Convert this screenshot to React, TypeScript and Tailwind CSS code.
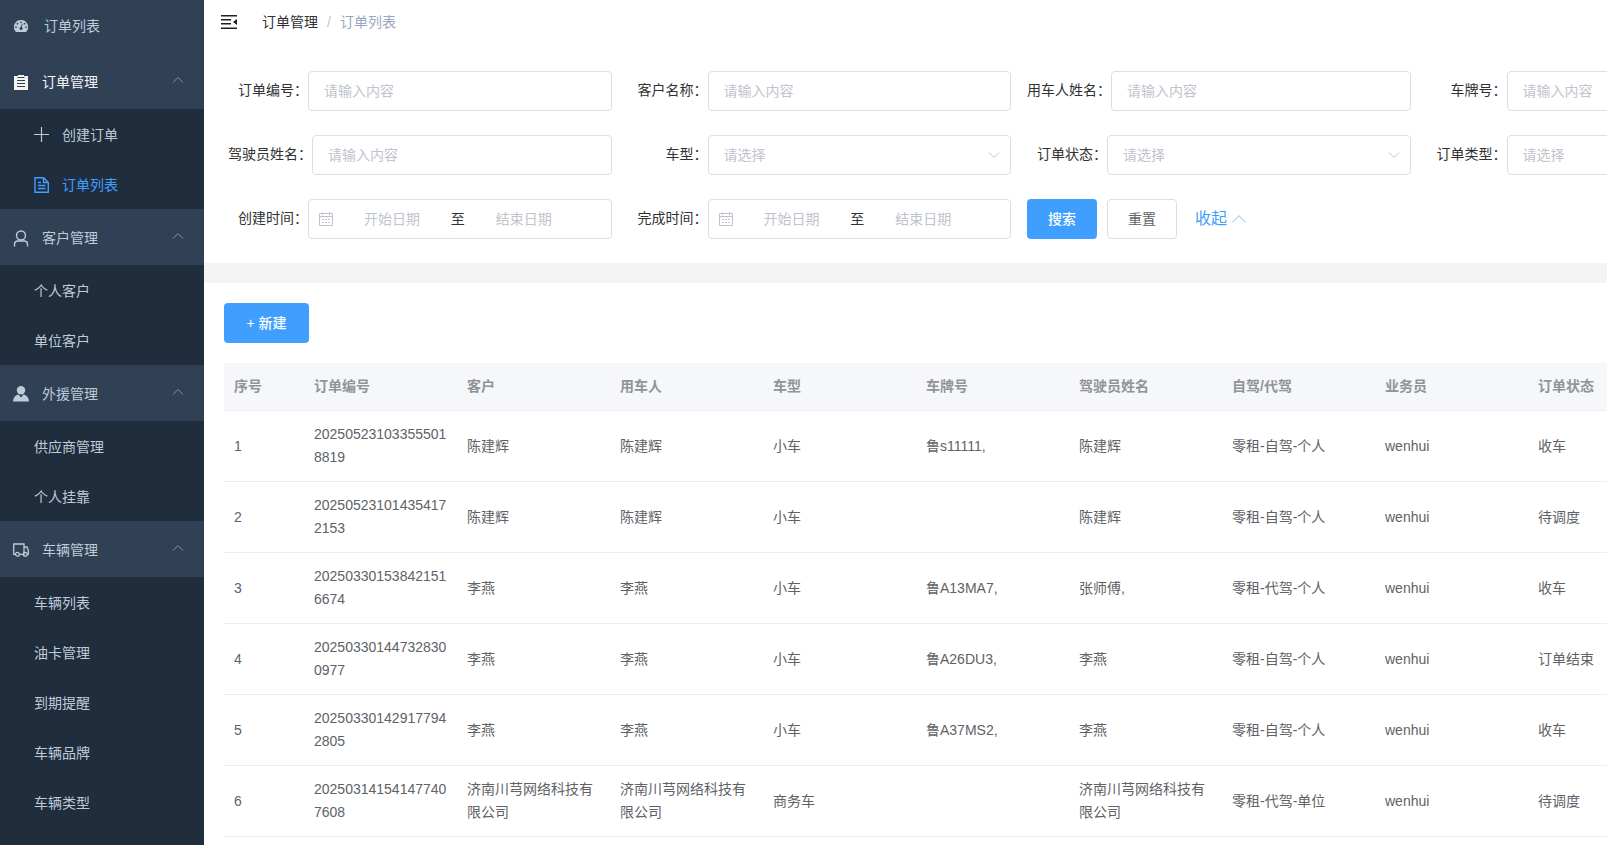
import type { ReactNode } from "react";
import { useId } from "react";

const DashboardIcon = () => (
  <svg width="14" height="12" viewBox="0 0 128 108" fill="currentColor" fillRule="evenodd">
    <path d="M64 0a64 64 0 0 0-56 96q4 12 12 12h88q8 0 12-12A64 64 0 0 0 64 0ZM18 72a8 8 0 1 1 0-16 8 8 0 0 1 0 16Zm14-31a8 8 0 1 1 0-16 8 8 0 0 1 0 16Zm32-13a8 8 0 1 1 0-16 8 8 0 0 1 0 16Zm14 9-7 29a13 13 0 1 1-7-2l7-29q5-3 7 2Zm18 4a8 8 0 1 1 0-16 8 8 0 0 1 0 16Zm14 31a8 8 0 1 1 0-16 8 8 0 0 1 0 16Z" />
  </svg>
);

const ClipboardIcon = () => (
  <svg width="14" height="15" viewBox="0 0 14 15" fill="currentColor" fillRule="evenodd">
    <path d="M0 1h4V0h6v1h4v14H0V1Zm3.500 1v1h7V2h-7ZM3 5v1h8V5H3Zm0 3v1h8V8H3Zm0 3v1h8v-1H3Z" />
  </svg>
);

const PlusIcon = () => (
  <svg width="16" height="16" viewBox="0 0 16 16" stroke="currentColor" strokeWidth="1.200">
    <path d="M7.500 0v15M0 7.500h15" />
  </svg>
);

const DocumentIcon = () => (
  <svg width="16" height="16" viewBox="0 0 16 16" fill="none" stroke="currentColor" strokeWidth="1.400">
    <path d="M1 .7h8.500L14.300 5.500v9.800H1zM9.500.7v4.800h4.800M4 5.500h3M4 8.500h7.500M4 11.500h7.500" />
  </svg>
);

const UserIcon = () => (
  <svg width="16" height="17" viewBox="0 0 16 17" fill="none" stroke="currentColor" strokeWidth="1.400">
    <circle cx="8" cy="5.500" r="4.500" />
    <path d="M1.500 16.500v-2q0-3.500 3.500-3.500h6q3.500 0 3.500 3.500v2" />
  </svg>
);

const UserSolidIcon = () => (
  <svg width="16" height="16" viewBox="0 0 16 16" fill="currentColor">
    <circle cx="8" cy="4.300" r="4.200" />
    <path d="M5.500 8.500 8 11.500l2.500-3q5 1 5.500 7H0q.5-6 5.500-7Z" />
  </svg>
);

const TruckIcon = () => (
  <svg width="16" height="14" viewBox="0 0 16 14" fill="none" stroke="currentColor" strokeWidth="1.300">
    <path d="M2.500 11.300H.7V1H11v10.300H6.500M11 4h3l1.300 3.500v3.800H14" />
    <circle cx="4.500" cy="11.300" r="1.900" />
    <circle cx="12.200" cy="11.300" r="1.900" />
  </svg>
);

const CalendarIcon = () => (
  <svg className="shrink-0" width="14" height="14" viewBox="0 0 14 14" fill="none" stroke="currentColor">
    <path d="M.5 1.500h13v12H.5zM.5 4.500h13M3.500 0v3M10.500 0v3M3 7.500h2M6 7.500h2M9 7.500h2M3 10.500h2M6 10.500h2M9 10.500h2" />
  </svg>
);

const Chevron = ({ up = false, size = 12 }: { up?: boolean; size?: number }) => (
  <svg width={size} height={size} viewBox="0 0 12 12" fill="none" stroke="currentColor">
    <path d={up ? "M1 8.500 6 3.500l5 5" : "M1 3.500 6 8.500l5-5"} strokeWidth={12 / size} />
  </svg>
);

const menus = [
  {
    title: "订单管理",
    icon: <ClipboardIcon />,
    active: true,
    items: [
      { title: "创建订单", icon: <PlusIcon /> },
      { title: "订单列表", icon: <DocumentIcon />, active: true },
    ],
  },
  {
    title: "客户管理",
    icon: <UserIcon />,
    items: [{ title: "个人客户" }, { title: "单位客户" }],
  },
  {
    title: "外援管理",
    icon: <UserSolidIcon />,
    items: [{ title: "供应商管理" }, { title: "个人挂靠" }],
  },
  {
    title: "车辆管理",
    icon: <TruckIcon />,
    items: [
      { title: "车辆列表" },
      { title: "油卡管理" },
      { title: "到期提醒" },
      { title: "车辆品牌" },
      { title: "车辆类型" },
    ],
  },
] as {
  title: string;
  icon: ReactNode;
  active?: boolean;
  items: { title: string; icon?: ReactNode; active?: boolean }[];
}[];

const Sidebar = () => (
  <nav className="w-[204px] shrink-0 overflow-hidden bg-[#1f2d3d] text-[#bfcbd9]">
    <a href="#" className="flex h-[53px] items-center gap-4 bg-[#304156] px-3.5 pb-0.5">
      <DashboardIcon />
      订单列表
    </a>
    {menus.map((menu) => (
      <div key={menu.title}>
        <button
          type="button"
          className={`flex h-14 w-full items-center bg-[#304156] pt-0.5 pr-5 pl-3 ${menu.active ? "text-[#f4f4f5]" : ""}`}
        >
          <span className="flex w-[18px] justify-center">{menu.icon}</span>
          <span className="ml-3 flex-1 text-left">{menu.title}</span>
          <span className="pb-1 text-[#8693a4]">
            <Chevron up />
          </span>
        </button>
        {menu.items.map((item) => (
          <a
            key={item.title}
            href="#"
            className={`flex h-[50px] items-center gap-3 pt-0.5 pl-[34px] ${item.active ? "text-[#409eff]" : ""}`}
          >
            {item.icon}
            {item.title}
          </a>
        ))}
      </div>
    ))}
  </nav>
);

const Field = ({ label, id, children }: { label: string; id: string; children: ReactNode }) => (
  <div className="flex h-10 items-center">
    <label htmlFor={id} className="min-w-20 shrink-0 pb-0.5 text-right text-[#303133]">
      {label}：
    </label>
    {children}
  </div>
);

const box =
  "h-10 w-full min-w-0 flex-1 rounded border border-[#dcdfe6] bg-white placeholder:text-[#c0c4cc] placeholder:opacity-100";

const TextField = ({ label }: { label: string }) => {
  const id = useId();
  return (
    <Field label={label} id={id}>
      <input id={id} type="text" placeholder="请输入内容" className={`${box} px-[15px]`} />
    </Field>
  );
};

const SelectField = ({ label }: { label: string }) => {
  const id = useId();
  return (
    <Field label={label} id={id}>
      <div className="relative flex flex-1 text-[#c0c4cc]">
        <select id={id} className={`${box} appearance-none px-[15px]`}>
          <option>请选择</option>
        </select>
        <span className="pointer-events-none absolute top-3.5 right-[11px]">
          <Chevron />
        </span>
      </div>
    </Field>
  );
};

const DateField = ({ label }: { label: string }) => {
  const id = useId();
  const input = "w-[39%] min-w-0 text-center placeholder:text-[#c0c4cc] placeholder:opacity-100";
  return (
    <Field label={label} id={id}>
      <div className={`${box} flex items-center px-2.5 text-[#c0c4cc]`}>
        <CalendarIcon />
        <input id={id} type="text" placeholder="开始日期" className={`${input} ml-1`} />
        <span className="w-[22px] text-center text-[#303133]">至</span>
        <input type="text" aria-label={`${label}结束日期`} placeholder="结束日期" className={input} />
      </div>
    </Field>
  );
};

const SearchForm = () => (
  <form className="grid min-w-[1618px] grid-cols-4 gap-x-4 gap-y-6 pt-[27px] pr-3 pb-6 pl-6">
    <TextField label="订单编号" />
    <TextField label="客户名称" />
    <TextField label="用车人姓名" />
    <TextField label="车牌号" />
    <TextField label="驾驶员姓名" />
    <SelectField label="车型" />
    <SelectField label="订单状态" />
    <SelectField label="订单类型" />
    <DateField label="创建时间" />
    <DateField label="完成时间" />
    <div className="flex items-center">
      <button type="button" className="h-10 w-[70px] rounded bg-[#409eff] font-medium text-white">
        搜索
      </button>
      <button
        type="button"
        className="ml-2.5 h-10 w-[70px] rounded border border-[#dcdfe6] bg-white text-[#606266]"
      >
        重置
      </button>
      <button type="button" className="ml-[18px] flex items-center gap-1 text-base text-[#409eff]">
        收起
        <span className="text-[#79bbff]">
          <Chevron up size={16} />
        </span>
      </button>
    </div>
  </form>
);

const columns = ["序号", "订单编号", "客户", "用车人", "车型", "车牌号", "驾驶员姓名", "自驾/代驾", "业务员", "订单状态"];

const rows = [
  ["1", "202505231033555018819", "陈建辉", "陈建辉", "小车", "鲁s11111,", "陈建辉", "零租-自驾-个人", "wenhui", "收车"],
  ["2", "202505231014354172153", "陈建辉", "陈建辉", "小车", "", "陈建辉", "零租-自驾-个人", "wenhui", "待调度"],
  ["3", "202503301538421516674", "李燕", "李燕", "小车", "鲁A13MA7,", "张师傅,", "零租-代驾-个人", "wenhui", "收车"],
  ["4", "202503301447328300977", "李燕", "李燕", "小车", "鲁A26DU3,", "李燕", "零租-自驾-个人", "wenhui", "订单结束"],
  ["5", "202503301429177942805", "李燕", "李燕", "小车", "鲁A37MS2,", "李燕", "零租-自驾-个人", "wenhui", "收车"],
  [
    "6",
    "202503141541477407608",
    "济南川芎网络科技有限公司",
    "济南川芎网络科技有限公司",
    "商务车",
    "",
    "济南川芎网络科技有限公司",
    "零租-代驾-单位",
    "wenhui",
    "待调度",
  ],
];

const OrderTable = () => (
  <table className="mt-5 w-[1457px] table-fixed border-separate border-spacing-0 text-left text-[#606266]">
    <thead>
      <tr className="bg-[#f5f7fa] text-[#909399]">
        {columns.map((column, i) => (
          <th
            key={column}
            className={`h-12 border-b border-[#ebeef5] px-2.5 pb-0.5 font-bold ${i === 0 ? "w-20" : "w-[153px]"}`}
          >
            {column}
          </th>
        ))}
      </tr>
    </thead>
    <tbody>
      {rows.map((row) => (
        <tr key={row[0]}>
          {row.map((cell, i) => (
            <td key={i} className="h-[71px] border-b border-[#ebeef5] px-2.5 leading-[23px] break-all">
              {cell}
            </td>
          ))}
        </tr>
      ))}
    </tbody>
  </table>
);

export default function App() {
  return (
    <div className="flex h-screen overflow-hidden bg-white font-['Liberation_Sans','Noto_Sans_CJK_SC',sans-serif] text-sm">
      <Sidebar />
      <main className="min-w-0 flex-1 overflow-hidden">
        <header className="flex h-11 items-center px-4">
          <button type="button" aria-label="收起菜单" className="text-[#1f1f1f]">
            <svg width="18" height="16" viewBox="0 0 18 16" fill="currentColor">
              <path d="M1 1h16v1.500H1zM1 5h10v1.500H1zM1 9h10v1.500H1zM1 13.500h16V15H1zM17 5v6l-4-3z" />
            </svg>
          </button>
          <ol className="ml-6 flex items-center">
            <li>
              <a href="#" className="text-[#303133]">
                订单管理
              </a>
            </li>
            <li className="mx-[9px] text-[#c0c4cc]">/</li>
            <li className="text-[#97a8be]">订单列表</li>
          </ol>
        </header>
        <SearchForm />
        <div className="h-5 bg-[#f4f4f4]" />
        <section className="p-5">
          <button type="button" className="h-10 w-[85px] rounded bg-[#409eff] font-medium text-white">
            + 新建
          </button>
          <OrderTable />
        </section>
      </main>
    </div>
  );
}
